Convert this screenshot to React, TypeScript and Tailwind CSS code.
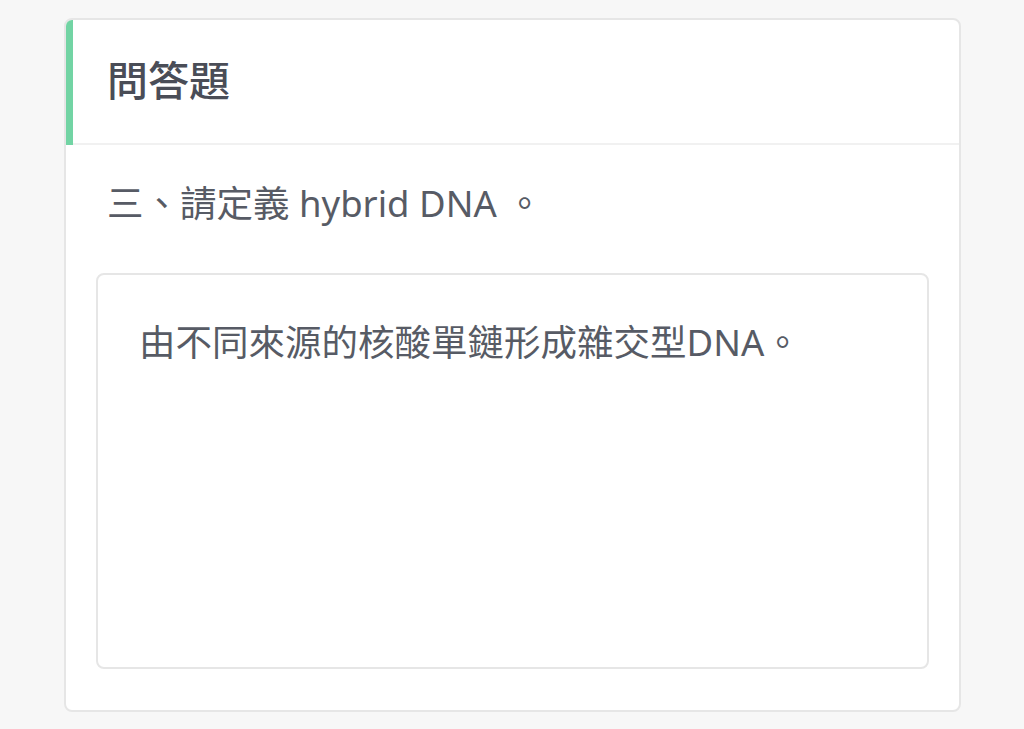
import React from "react";

export default function App() {
  return (
    <div
      className="w-[1024px] h-[729px] bg-[#f7f7f7] pt-[18px] pl-[64px]"
      style={{ fontFamily: '"Noto Sans", "Noto Sans CJK TC", sans-serif' }}
    >
      <div className="w-[897px] h-[694px] bg-white border-2 border-[#e6e6e6] rounded-[8px] flex flex-col overflow-hidden">
        <div className="relative h-[125px] border-b-2 border-[#f1f1f1] flex items-center pl-[41px] pb-[6px] shrink-0">
          <div className="absolute left-0 top-0 h-[125px] w-[7px] bg-[#72d4a4]" />
          <h1
            className="text-[41px] font-medium text-[#4a4d57] leading-none"
            style={{ fontFamily: '"Noto Sans CJK TC", sans-serif' }}
          >
            問答題
          </h1>
        </div>
        <div className="flex-1 flex flex-col px-[30px] pt-[33px] pb-[41px]">
          <p className="text-[36.5px] leading-[50px] text-[#575b65] pl-[11px]">
            三、請定義 hybrid DNA 。
          </p>
          <div className="mt-[45px] flex-1 border-2 border-[#e6e6e6] rounded-[8px] px-[41px] pt-[40px]">
            <p className="text-[36.5px] leading-[54px] text-[#575b65]">
              由不同來源的核酸單鏈形成雜交型DNA。
            </p>
          </div>
        </div>
      </div>
    </div>
  );
}
